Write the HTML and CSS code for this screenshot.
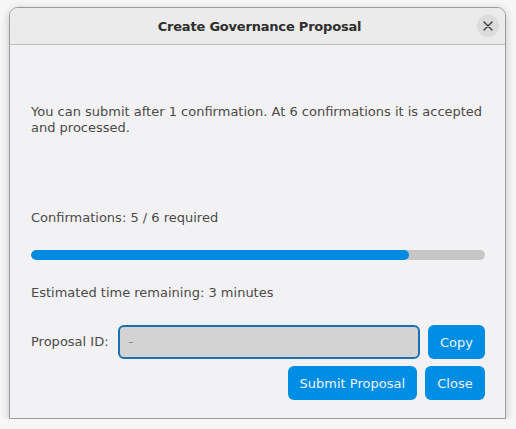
FILE: index.html
```html
<!DOCTYPE html>
<html>
<head>
<meta charset="utf-8">
<link rel="stylesheet" href="styles.css">
</head>
<body>
<div class="window">
  <div class="titlebar">
    <span class="title">Create Governance Proposal</span>
    <button class="close-x" aria-label="Close">
      <svg width="10" height="10" viewBox="0 0 10 10"><path d="M1 1 L9 9 M9 1 L1 9" stroke="#3a3a3a" stroke-width="1.4" stroke-linecap="round"/></svg>
    </button>
  </div>
  <div class="content">
    <p class="info">You can submit after 1 confirmation. At 6 confirmations it is accepted and processed.</p>
    <div class="confirm">Confirmations: 5 / 6 required</div>
    <div class="progress"><div class="fill" style="width: 83.3%"></div></div>
    <div class="eta">Estimated time remaining: 3 minutes</div>
    <div class="id-row">
      <span class="label">Proposal ID:</span>
      <div class="entry">-</div>
      <button class="btn copy">Copy</button>
    </div>
    <div class="actions">
      <button class="btn">Submit Proposal</button>
      <button class="btn close">Close</button>
    </div>
  </div>
</div>
</body>
</html>
```
FILE: styles.css
```css
html, body {
  margin: 0;
  padding: 0;
  background: #f7f7f7;
  font-family: "DejaVu Sans", sans-serif;
}
.window {
  margin: 7px 0 0 9px;
  width: 495px;
  height: 410px;
  border: 1px solid #9c9c9c;
  border-radius: 9px 9px 0 0;
  background: #f2f2f4;
  box-shadow: 0 2px 10px rgba(0,0,0,0.22);
  display: flex;
  flex-direction: column;
  overflow: hidden;
}
.titlebar {
  height: 36px;
  flex: none;
  background: #ebebeb;
  border-bottom: 1px solid #bdbdbd;
  display: flex;
  align-items: center;
  justify-content: center;
  position: relative;
}
.title {
  font-weight: bold;
  font-size: 13px;
  letter-spacing: -0.2px;
  color: #2e2e2e;
  margin-top: 1px;
  margin-left: 4px;
}
.close-x {
  position: absolute;
  right: 6px;
  top: 7px;
  width: 22px;
  height: 22px;
  border-radius: 50%;
  border: none;
  background: #dcdcdc;
  padding: 0;
  display: flex;
  align-items: center;
  justify-content: center;
}
.content {
  padding: 0 20px 0 21px;
  display: flex;
  flex-direction: column;
  color: #4c4a48;
  font-size: 13px;
  line-height: 16px;
}
.info {
  margin: 59px 0 0 0;
}
.confirm {
  margin-top: 74px;
}
.progress {
  margin-top: 24px;
  height: 10px;
  border-radius: 5px;
  background: #c6c6c6;
  overflow: hidden;
}
.fill {
  height: 100%;
  background: #008be3;
  border-radius: 5px;
}
.eta {
  margin-top: 25px;
}
.id-row {
  margin-top: 24px;
  display: flex;
  align-items: center;
  gap: 8px;
}
.label {
  margin-right: 1px;
}
.entry {
  flex: 1;
  height: 30px;
  box-sizing: content-box;
  border: 2px solid #1b6fb3;
  border-radius: 6px;
  background: #d3d3d3;
  color: #8a8a8a;
  display: flex;
  align-items: center;
  padding: 0 9px;
}
.btn {
  height: 34px;
  border: none;
  border-radius: 6px;
  background: #008de4;
  color: #eef4fa;
  font-family: "DejaVu Sans", sans-serif;
  font-size: 13px;
  padding: 0 12px;
}
.copy {
  width: 57px;
  padding: 0;
}
.actions {
  margin-top: 7px;
  display: flex;
  justify-content: flex-end;
  gap: 8px;
}
.close {
  width: 60px;
  padding: 0;
}
```
